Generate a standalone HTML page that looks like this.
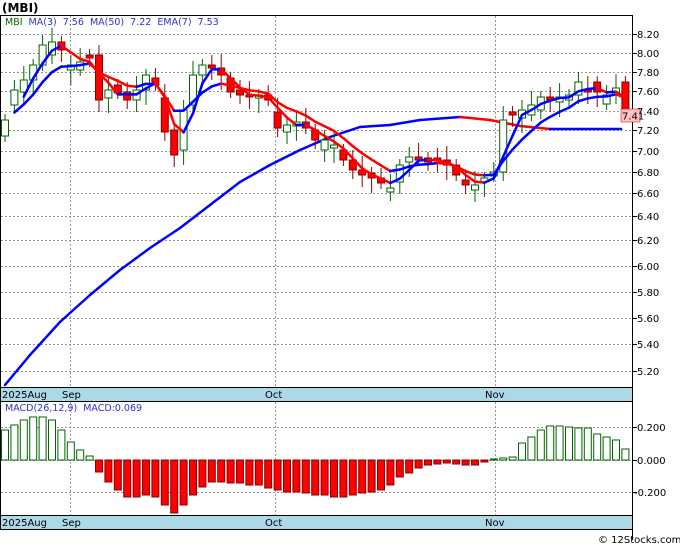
<!DOCTYPE html>
<html><head><meta charset="utf-8"><style>
html,body{margin:0;padding:0;background:#fff;width:680px;height:546px;overflow:hidden}
svg{display:block;font-family:"DejaVu Sans","Liberation Sans",sans-serif}
</style></head><body>
<svg id="s" width="680" height="546" xmlns="http://www.w3.org/2000/svg">
<rect width="680" height="546" fill="#fff"/>
<g id="grid" stroke="#999" stroke-dasharray="2,2" stroke-width="1"></g>
<g id="ma50"></g>
<g id="candles"></g>
<g id="lines"></g>
<g id="macd"></g>
<rect x="0.5" y="15.5" width="632" height="372" fill="none" stroke="#000"/>
<rect x="0.5" y="387.5" width="632" height="14" fill="#add8e6" stroke="#000"/>
<rect x="0.5" y="401.5" width="632" height="114" fill="none" stroke="#000"/>
<rect x="0.5" y="515.5" width="632" height="14" fill="#add8e6" stroke="#000"/>
<line x1="632.5" y1="15" x2="632.5" y2="540" stroke="#000"/>
<g id="ticks" stroke="#000"></g>
<g font-size="10" fill="#000">
<text x="2" y="12" font-weight="bold" font-size="12">(MBI)</text>
<text x="5" y="25" font-size="9.5"><tspan fill="#006400">MBI</tspan><tspan fill="#3030d0" xml:space="preserve">  MA(3)  7.56  MA(50)  7.22  EMA(7)  7.53</tspan></text>
<text x="5" y="411" font-size="9.5" fill="#3030d0" xml:space="preserve">MACD(26,12,9)  MACD:0.069</text>
<text x="2" y="398">2025Aug</text><text x="62" y="398">Sep</text><text x="265" y="398">Oct</text><text x="485" y="398">Nov</text>
<text x="2" y="526">2025Aug</text><text x="62" y="526">Sep</text><text x="265" y="526">Oct</text><text x="485" y="526">Nov</text>
</g>
<g id="ylab" font-size="10" fill="#000"></g>
<rect x="621" y="109" width="19" height="13" fill="#ffc0c0" stroke="#c00" stroke-width="0.5"/>
<text x="622" y="119.5" font-size="10">7.41</text>
<text x="598" y="543" font-size="10">© 12Stocks.com</text>
</svg>
<script>
var NS="http://www.w3.org/2000/svg";
function el(t,a,p){var e=document.createElementNS(NS,t);for(var k in a)e.setAttribute(k,a[k]);document.getElementById(p).appendChild(e);return e;}
var lv=[["8.20",34],["8.00",53],["7.80",72],["7.60",91],["7.40",111],["7.20",130],["7.00",151],["6.80",172],["6.60",193],["6.40",216],["6.20",240],["6.00",266],["5.80",292],["5.60",318],["5.40",344],["5.20",371]];
lv.forEach(function(l){el("line",{x1:1,y1:l[1]+.5,x2:632,y2:l[1]+.5},"grid");el("text",{x:637,y:l[1]+4},"ylab").textContent=l[0];el("line",{x1:632,y1:l[1]+.5,x2:637,y2:l[1]+.5},"ticks");});
[70,275,495].forEach(function(x){el("line",{x1:x+.5,y1:16,x2:x+.5,y2:387},"grid");el("line",{x1:x+.5,y1:402,x2:x+.5,y2:515},"grid");});
[[ "0.200",427],["0.000",460],["-0.200",492]].forEach(function(l){el("line",{x1:1,y1:l[1]+.5,x2:632,y2:l[1]+.5},"grid");el("text",{x:l[0][0]=="-"?634:637,y:l[1]+4},"ylab").textContent=l[0];el("line",{x1:632,y1:l[1]+.5,x2:637,y2:l[1]+.5},"ticks");});
var c=[120,90,80,65,45,42,50,65,62,58,100,90,93,100,90,75,85,132,155,110,75,65,68,75,92,95,97,95,100,128,125,122,128,140,140,145,160,170,175,178,183,188,165,157,160,162,160,165,175,185,185,178,172,120,115,110,105,97,100,97,95,82,90,92,95,88,110];
var o=[136,105,92,80,65,55,42,70,70,55,55,98,85,92,100,90,78,98,130,150,105,75,65,68,78,90,95,98,95,112,132,126,122,130,150,148,150,160,170,173,178,192,182,162,157,158,158,160,165,180,190,182,176,172,112,118,115,110,97,102,100,95,90,82,104,95,82];
var n=c.length,X=function(i){return 5+9.4*i;};
for(var i=0;i<n;i++){var up=c[i]<o[i],t=Math.min(c[i],o[i]),b=Math.max(c[i],o[i]);if(b-t<2)b=t+2;
var col=up?"#006400":"#8b0000";
el("line",{x1:X(i),y1:t-6-(i%3)*4,x2:X(i),y2:b+6+(i%4)*3,stroke:col},"candles");
el("rect",{x:X(i)-3.5,y:t,width:7,height:b-t,fill:up?"#fff":"#f00",stroke:col},"candles");}
function seg(pts,g){for(var i=1;i<pts.length;i++){var a=pts[i-1],b=pts[i];el("line",{x1:a[0],y1:a[1],x2:b[0],y2:b[1],stroke:b[1]>a[1]+0.3?"#f00":"#00f","stroke-width":2.5,"stroke-linecap":"round"},g);}}
var m3=[],e7=[],e=c[0];
for(var i=0;i<n;i++){if(i>=2)m3.push([X(i),(c[i]+c[i-1]+c[i-2])/3]);e=e+(c[i]-e)*0.25;if(i>=1)e7.push([X(i),e]);}
seg([[5,385],[30,355],[60,322],[90,295],[120,270],[150,248],[180,228],[210,205],[240,182],[270,165],[300,150],[330,137],[360,127],[390,125],[420,120],[460,117],[490,120],[520,126],[550,129],[580,129],[621,129]],"ma50");
seg(e7,"lines");seg(m3,"lines");
var h=[30,35,40,43,43,40,30,18,10,4,-12,-22,-30,-37,-37,-35,-37,-45,-53,-45,-35,-27,-22,-22,-23,-23,-25,-25,-28,-30,-32,-32,-33,-35,-35,-37,-37,-35,-33,-32,-30,-25,-17,-13,-8,-5,-4,-3,-4,-5,-5,-2,1,2,3,17,23,30,34,34,33,32,32,26,23,20,11];
for(var i=0;i<n;i++){var v=h[i],up=v>=0;el("rect",{x:X(i)-3.5,y:up?460-v:460,width:7,height:Math.max(Math.abs(v),1),fill:up?"#fff":"#f00",stroke:up?"#006400":"#8b0000"},"macd");}
</script>
</body></html>
